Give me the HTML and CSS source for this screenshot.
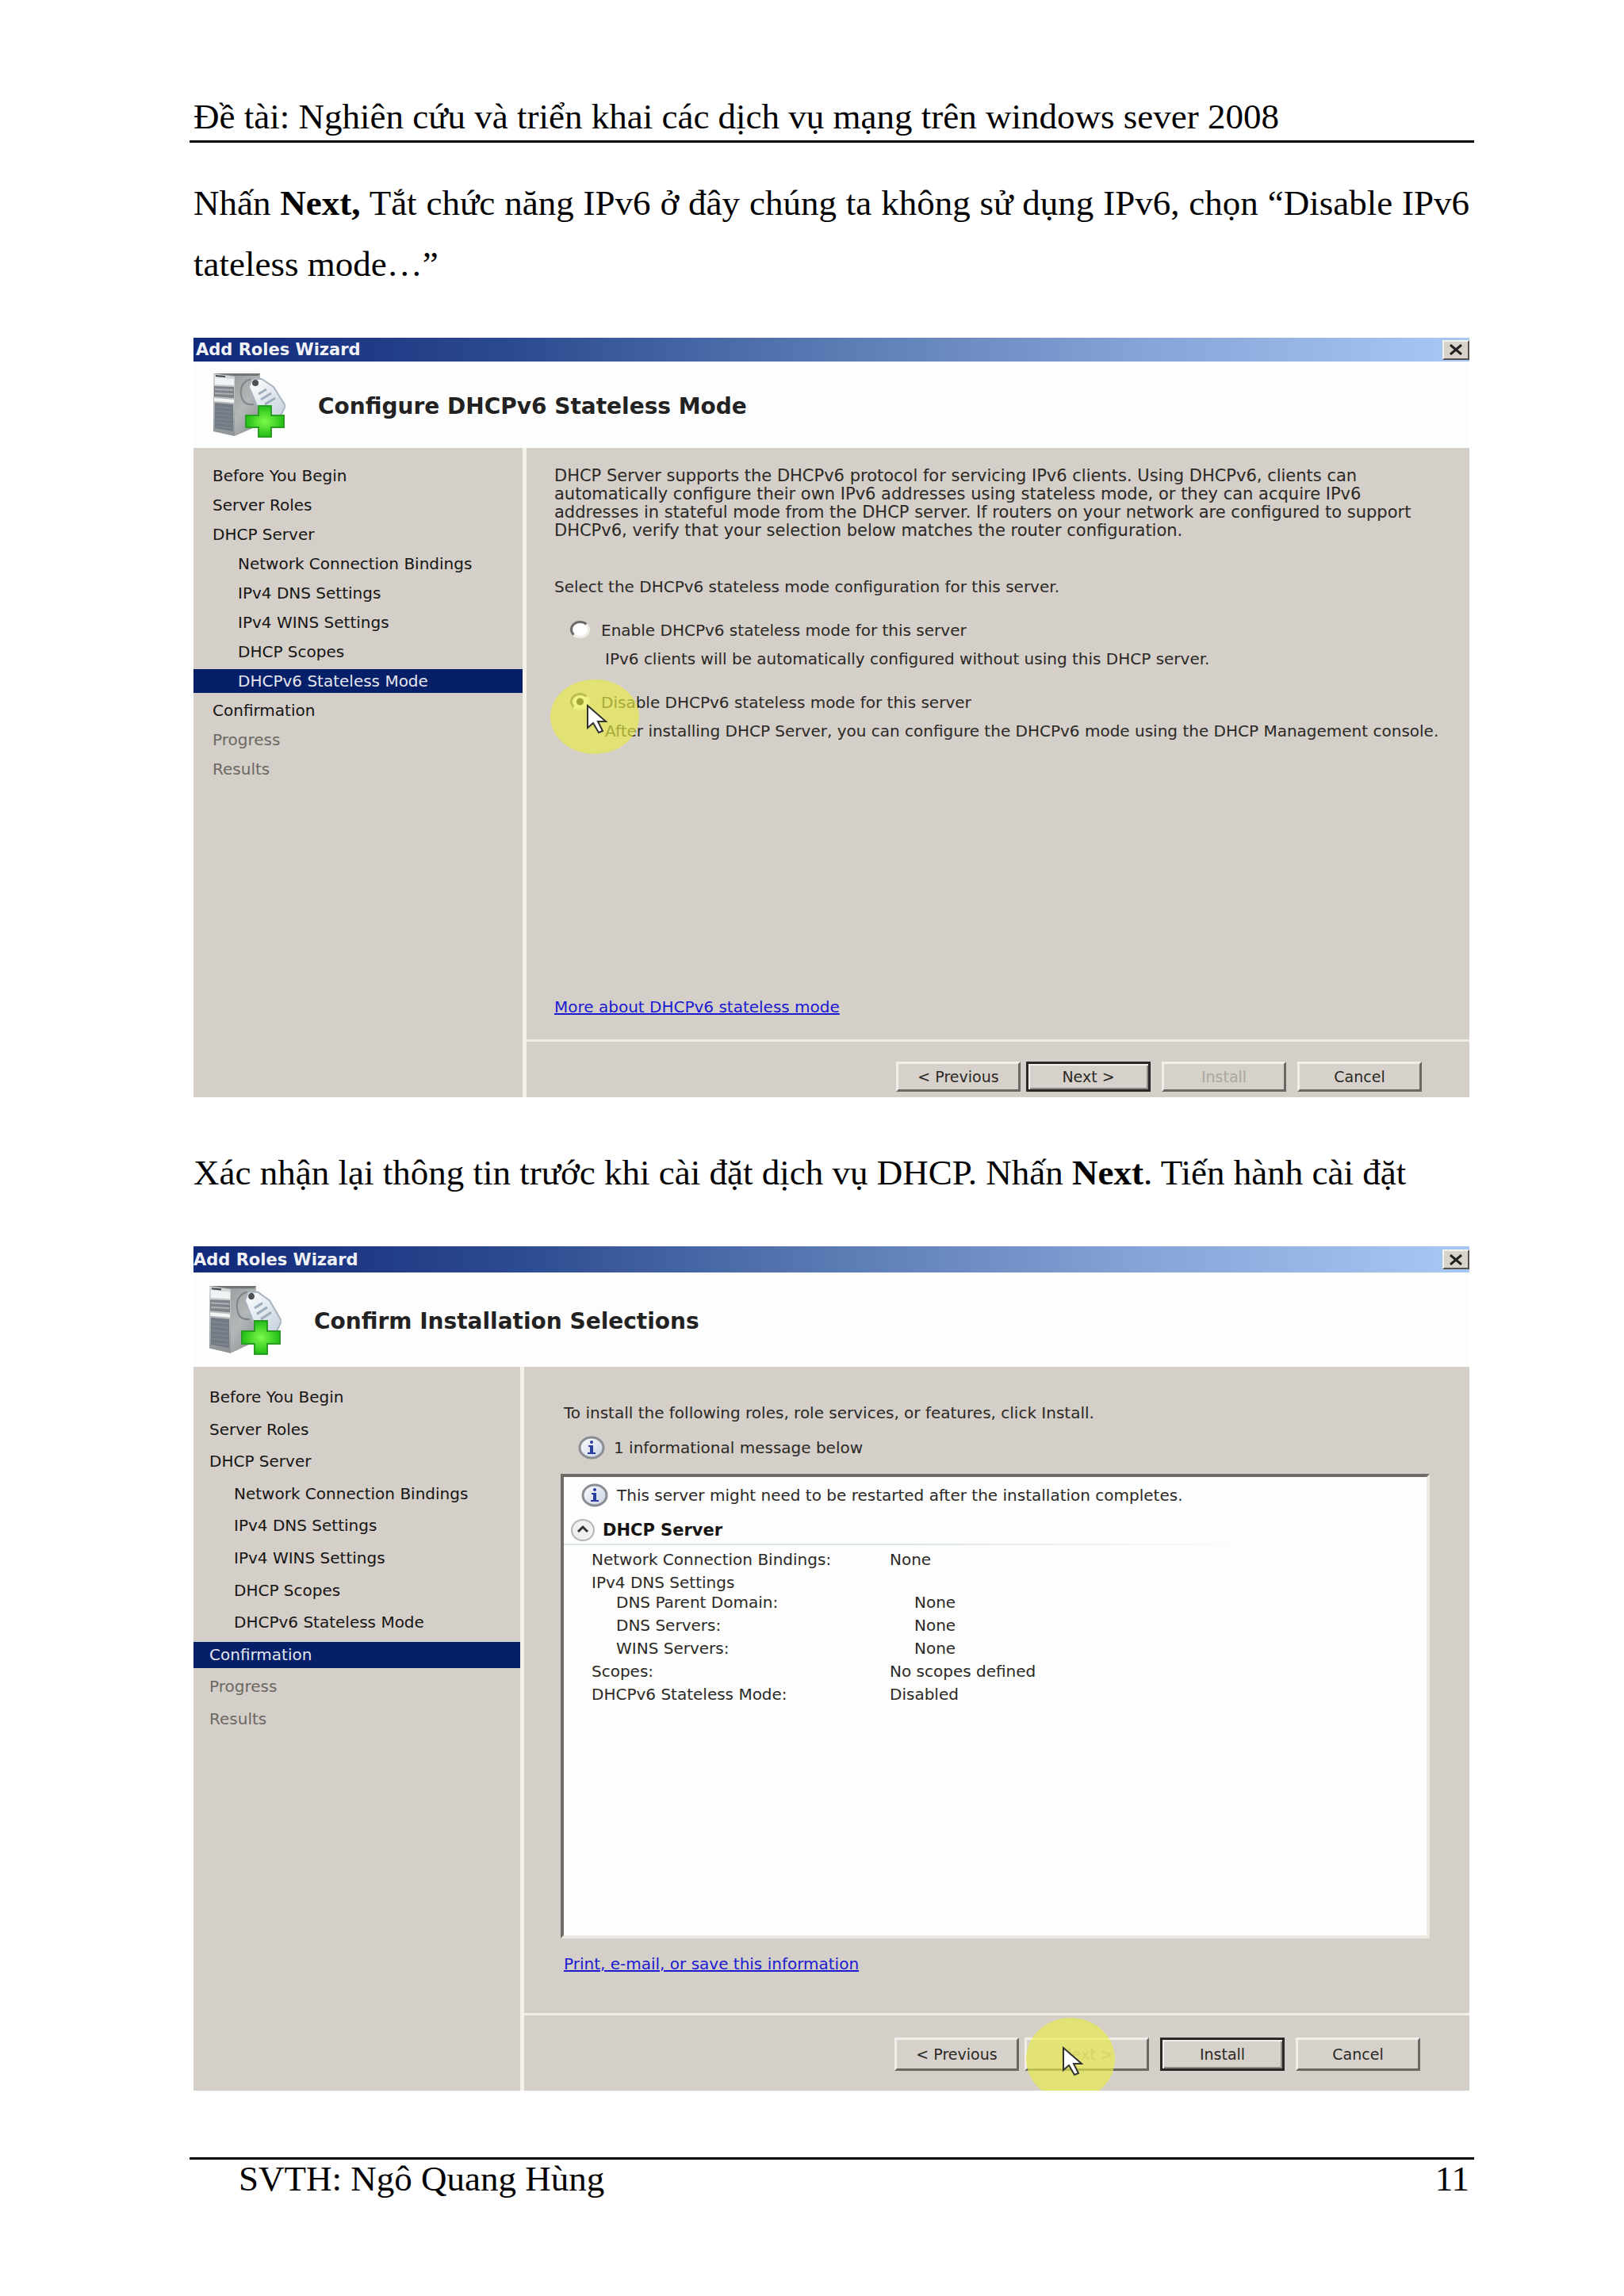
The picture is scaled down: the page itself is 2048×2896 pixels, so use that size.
FILE: index.html
```
<!DOCTYPE html>
<html lang="vi">
<head>
    <meta charset="UTF-8">
    <meta name="viewport" content="width=device-width, initial-scale=1.0">
    <title>Nghiên cứu và triển khai các dịch vụ mạng trên windows sever 2008</title>
    <link rel="stylesheet" href="styles.css">
</head>
<body>

    <!-- Shared icons -->
    <svg class="defs" width="0" height="0" aria-hidden="true">
        <defs>
            <linearGradient id="side" x1="0" y1="0" x2="1" y2="1">
                <stop offset="0" stop-color="#8e9192"/>
                <stop offset="0.6" stop-color="#b4b7b8"/>
                <stop offset="1" stop-color="#85898b"/>
            </linearGradient>
            <linearGradient id="front" x1="0" y1="0" x2="0" y2="1">
                <stop offset="0" stop-color="#d5d9da"/>
                <stop offset="1" stop-color="#8d9296"/>
            </linearGradient>
            <linearGradient id="tag" x1="0" y1="0" x2="1" y2="1">
                <stop offset="0" stop-color="#ffffff"/>
                <stop offset="1" stop-color="#c3d0dc"/>
            </linearGradient>
            <radialGradient id="plus">
                <stop offset="0" stop-color="#7dfb4a"/>
                <stop offset="1" stop-color="#22bd16"/>
            </radialGradient>
            <linearGradient id="bubble" x1="0" y1="0" x2="1" y2="1">
                <stop offset="0" stop-color="#ffffff"/>
                <stop offset="1" stop-color="#c5cfe2"/>
            </linearGradient>
            <symbol id="server" viewBox="0 0 92 82" preserveAspectRatio="none">
                <path d="M1 1H60V66L28 80L1 74Z" fill="url(#side)"/>
                <path d="M1 1L28 5V80L1 74Z" fill="url(#front)"/>
                <path d="M1 1H60L58 4H28Z" fill="#707577"/>
                <path d="M3 6L27 8V16L3 15Z" fill="#f0f2f3"/>
                <path d="M4 3L16 4V6L4 5Z" fill="#44494c"/>
                <path d="M2 17L27 18V32L2 30Z" fill="#7d8388"/>
                <path d="M3 21L26 22M3 26L26 27" stroke="#a9afb3" stroke-width="2"/>
                <path d="M2 32L27 34V38L2 36Z" fill="#f3f5f5"/>
                <path d="M3 38L26 40V74L3 70Z" fill="#737a83"/>
                <path d="M4 43L25 45M4 48L25 50M4 53L25 55M4 58L25 60M4 63L25 65M4 68L25 70" stroke="#858b94" stroke-width="1"/>
                <path d="M50 8C36 10 34 22 37 32C39 38 44 41 52 40" fill="none" stroke="#7f8587" stroke-width="2"/>
                <path d="M46 18L50 8L62 8L77 18L92 42L84 58L58 46Z" fill="url(#tag)" stroke="#a9b6c2" stroke-width="2"/>
                <path d="M58 27L68 21M61 34L74 26M66 40L79 32" stroke="#9faebd" stroke-width="3"/>
                <circle cx="54" cy="13" r="4" fill="#4b5052"/>
                <path d="M58 42H74V54H90V69H74V81H58V69H42V54H58Z" fill="url(#plus)" stroke="#2a9e22" stroke-width="2"/>
            </symbol>
            <symbol id="info" viewBox="0 0 34 30">
                <ellipse cx="17" cy="15" rx="15" ry="13" fill="url(#bubble)" stroke="#8a8d92" stroke-width="3"/>
                <circle cx="17" cy="8" r="2" fill="#2a3ea0"/>
                <path d="M13 12H19V21H22V23H12V21H15V14H13Z" fill="#2a3ea0"/>
            </symbol>
            <symbol id="arrow" viewBox="0 0 28 38">
                <path d="M2 2V30L9 24L16 36L21 34L15 22H25Z" fill="#fff" stroke="#333" stroke-width="2"/>
            </symbol>
            <symbol id="cross" viewBox="0 0 18 14">
                <path d="M2 1L16 13M16 1L2 13" stroke="#222" stroke-width="3"/>
            </symbol>
        </defs>
    </svg>

    <div class="page">
        <header class="page-header">Đề tài: Nghiên cứu và triển khai các dịch vụ mạng trên windows sever 2008</header>

        <main>
            <p class="step">Nhấn <b>Next,</b> Tắt chức năng IPv6 ở đây chúng ta không sử dụng IPv6, chọn “Disable IPv6 tateless mode…”</p>

            <!-- DHCPv6 stateless mode -->
            <section class="wizard mode">
                <div class="title-bar">
                    <span>Add Roles Wizard</span>
                    <button class="close" aria-label="Close"><svg width="18" height="14"><use href="#cross"/></svg></button>
                </div>
                <div class="banner">
                    <svg class="server" width="92" height="82"><use href="#server"/></svg>
                    <h2>Configure DHCPv6 Stateless Mode</h2>
                </div>
                <div class="wizard-body">
                    <ul class="steps">
                        <li>Before You Begin</li>
                        <li>Server Roles</li>
                        <li>DHCP Server</li>
                        <li class="sub">Network Connection Bindings</li>
                        <li class="sub">IPv4 DNS Settings</li>
                        <li class="sub">IPv4 WINS Settings</li>
                        <li class="sub">DHCP Scopes</li>
                        <li class="sub current">DHCPv6 Stateless Mode</li>
                        <li>Confirmation</li>
                        <li class="later">Progress</li>
                        <li class="later">Results</li>
                    </ul>
                    <div class="pane">
                        <div class="content">
                            <p class="intro">DHCP Server supports the DHCPv6 protocol for servicing IPv6 clients. Using DHCPv6, clients can<br>
                                automatically configure their own IPv6 addresses using stateless mode, or they can acquire IPv6<br>
                                addresses in stateful mode from the DHCP server. If routers on your network are configured to support<br>
                                DHCPv6, verify that your selection below matches the router configuration.</p>
                            <p class="question">Select the DHCPv6 stateless mode configuration for this server.</p>
                            <div class="option">
                                <input type="radio" name="stateless" id="enable">
                                <label for="enable">Enable DHCPv6 stateless mode for this server</label>
                                <p>IPv6 clients will be automatically configured without using this DHCP server.</p>
                            </div>
                            <div class="option">
                                <input type="radio" name="stateless" id="disable" checked>
                                <label for="disable">Disable DHCPv6 stateless mode for this server</label>
                                <p>After installing DHCP Server, you can configure the DHCPv6 mode using the DHCP Management console.</p>
                                <div class="pointer"><svg width="28" height="38"><use href="#arrow"/></svg></div>
                            </div>
                            <a class="help" href="#">More about DHCPv6 stateless mode</a>
                        </div>
                        <div class="buttons">
                            <button>&lt; Previous</button>
                            <button class="default">Next &gt;</button>
                            <button disabled>Install</button>
                            <button>Cancel</button>
                        </div>
                    </div>
                </div>
            </section>

            <p class="step">Xác nhận lại thông tin trước khi cài đặt dịch vụ DHCP. Nhấn <b>Next</b>. Tiến hành cài đặt</p>

            <!-- Confirmation -->
            <section class="wizard confirm">
                <div class="title-bar">
                    <span>Add Roles Wizard</span>
                    <button class="close" aria-label="Close"><svg width="18" height="14"><use href="#cross"/></svg></button>
                </div>
                <div class="banner">
                    <svg class="server" width="92" height="88"><use href="#server"/></svg>
                    <h2>Confirm Installation Selections</h2>
                </div>
                <div class="wizard-body">
                    <ul class="steps">
                        <li>Before You Begin</li>
                        <li>Server Roles</li>
                        <li>DHCP Server</li>
                        <li class="sub">Network Connection Bindings</li>
                        <li class="sub">IPv4 DNS Settings</li>
                        <li class="sub">IPv4 WINS Settings</li>
                        <li class="sub">DHCP Scopes</li>
                        <li class="sub">DHCPv6 Stateless Mode</li>
                        <li class="current">Confirmation</li>
                        <li class="later">Progress</li>
                        <li class="later">Results</li>
                    </ul>
                    <div class="pane">
                        <div class="content">
                            <p>To install the following roles, role services, or features, click Install.</p>
                            <div class="message count"><svg width="34" height="30"><use href="#info"/></svg>1 informational message below</div>
                            <div class="summary">
                                <div class="message"><svg width="34" height="30"><use href="#info"/></svg>This server might need to be restarted after the installation completes.</div>
                                <h3>
                                    <svg width="30" height="28" viewBox="0 0 30 28">
                                        <ellipse cx="15" cy="14" rx="14" ry="13" fill="#f0f0f0" stroke="#b5b5b5" stroke-width="2"/>
                                        <path d="M9 16L15 10L21 16" fill="none" stroke="#333" stroke-width="3"/>
                                    </svg>
                                    DHCP Server
                                </h3>
                                <table>
                                    <tr><th>Network Connection Bindings:</th><td>None</td></tr>
                                    <tr class="group"><th>IPv4 DNS Settings</th><td></td></tr>
                                    <tr class="nested"><th>DNS Parent Domain:</th><td>None</td></tr>
                                    <tr class="nested"><th>DNS Servers:</th><td>None</td></tr>
                                    <tr class="nested"><th>WINS Servers:</th><td>None</td></tr>
                                    <tr><th>Scopes:</th><td>No scopes defined</td></tr>
                                    <tr><th>DHCPv6 Stateless Mode:</th><td>Disabled</td></tr>
                                </table>
                            </div>
                            <a class="help" href="#">Print, e-mail, or save this information</a>
                        </div>
                        <div class="buttons">
                            <button>&lt; Previous</button>
                            <button disabled>Next &gt;</button>
                            <button class="default">Install</button>
                            <button>Cancel</button>
                            <div class="pointer"><svg width="28" height="38"><use href="#arrow"/></svg></div>
                        </div>
                    </div>
                </div>
            </section>
        </main>

        <footer class="page-footer">
            <span>SVTH: Ngô Quang Hùng</span>
            <span>11</span>
        </footer>
    </div>

</body>
</html>
```
FILE: styles.css
```
* {
    box-sizing: border-box;
}
body {
    margin: 0;
    background: #fff;
    color: #000;
    font-family: "Liberation Serif", "Times New Roman", serif;
    font-size: 45px;
}
p, h2, h3, ul {
    margin: 0;
    padding: 0;
}
.defs {
    position: absolute;
}

/* Document page */
.page {
    padding: 117px 189px 100px 239px;
}
.page-header {
    padding-left: 5px;
    line-height: 60px;
    border-bottom: 3px solid #000;
}
main {
    padding: 38px 6px 84px 5px;
}
.step {
    line-height: 77px;
    margin-bottom: 54px;
    text-align: justify;
}
.page-footer {
    display: flex;
    justify-content: space-between;
    padding: 0 6px 0 62px;
    border-top: 3px solid #000;
    line-height: 48px;
}

/* Wizard window */
.wizard {
    position: relative;
    overflow: hidden;
    background: #d4cfc8;
    color: #2b2926;
    font-family: "DejaVu Sans", Verdana, sans-serif;
    font-size: 20px;
    line-height: 24px;
}
.mode {
    margin-bottom: 57px;
}
.title-bar {
    display: flex;
    align-items: center;
    justify-content: space-between;
    height: 30px;
    padding-left: 3px;
    background: linear-gradient(to right, #10297a, #2c4a90 25%, #5a7ab4 50%, #86a5d8 75%, #a8c8f4);
    color: #f0f2f8;
    font-size: 21px;
    font-weight: bold;
}
.close {
    display: flex;
    align-items: center;
    justify-content: center;
    width: 34px;
    height: 25px;
    padding: 0;
    background: #d8d4cc;
    border: 2px solid;
    border-color: #f4f2ee #55534f #55534f #f4f2ee;
}
.banner {
    display: flex;
    align-items: center;
    gap: 41px;
    height: 109px;
    padding-left: 24px;
    background: #fdfdfd;
}
.banner h2 {
    padding-top: 4px;
    color: #222;
    font-size: 28px;
    line-height: 34px;
}
.wizard-body {
    display: flex;
}
.steps {
    display: flex;
    flex-direction: column;
    gap: 7px;
    width: 415px;
    padding-top: 20px;
    list-style: none;
    color: #161514;
}
.steps li {
    padding-left: 24px;
    line-height: 30px;
}
.steps .sub {
    padding-left: 56px;
}
.steps .current {
    background: #061f69;
    color: #e4e6ee;
}
.steps .later {
    color: #6b6864;
}
.pane {
    flex: 1;
    border-left: 5px solid #f5f2ec;
}
.content {
    display: flex;
    flex-direction: column;
    align-items: flex-start;
    min-height: 746px;
    padding: 24px 35px 29px;
}
.intro {
    font-size: 21px;
    line-height: 23px;
    white-space: nowrap;
}
.question {
    margin-top: 47px;
}
.option {
    position: relative;
    display: grid;
    grid-template-columns: 27px auto;
    column-gap: 12px;
    row-gap: 12px;
    margin: 31px 0 0 20px;
}
.option p {
    grid-column: 2;
    padding-left: 5px;
    white-space: nowrap;
}
.option input {
    appearance: none;
    width: 25px;
    height: 22px;
    margin: 0;
    border: 3px solid;
    border-color: #6d6a66 #f0eee9 #f0eee9 #6d6a66;
    border-radius: 50%;
    background: #fff;
}
.option input:checked {
    background: radial-gradient(circle, #1c1b19 4px, #fff 5px);
}
.help {
    margin-top: auto;
    color: #1c1ad0;
}
.buttons {
    position: relative;
    display: flex;
    justify-content: flex-end;
    gap: 14px;
    padding: 25px 60px 7px 0;
    border-top: 3px solid #f0ece7;
}
.buttons button {
    width: 157px;
    height: 38px;
    padding: 0;
    background: #d6d2cb;
    border: 3px solid;
    border-color: #f2efea #6b6864 #6b6864 #f2efea;
    color: #2b2926;
    font-family: inherit;
    font-size: 19px;
}
.buttons button:first-child {
    margin-right: -7px;
}
.buttons .default {
    border-color: #2a2826;
    box-shadow: inset 2px 2px #f2efea, inset -2px -2px #8d8a85;
}
.buttons button:disabled {
    color: #aaa6a0;
}

/* Mouse pointer with its yellow highlight */
.pointer {
    position: absolute;
    left: -25px;
    top: -17px;
    width: 112px;
    height: 94px;
    padding: 31px 0 0 45px;
    border-radius: 50%;
    background: rgba(232, 236, 69, 0.65);
    line-height: 0;
    pointer-events: none;
}

/* Confirmation window */
.confirm .title-bar {
    height: 33px;
    padding-left: 0;
}
.confirm .banner {
    height: 119px;
    padding-left: 19px;
}
.confirm .steps {
    width: 412px;
    height: 461px;
    padding-top: 22px;
    justify-content: space-between;
    gap: 0;
}
.confirm .steps li {
    padding-left: 20px;
    line-height: 33px;
}
.confirm .steps .sub {
    padding-left: 51px;
}
.confirm .content {
    align-items: stretch;
    padding: 46px 50px 50px;
}
.message {
    display: flex;
    align-items: center;
    gap: 11px;
    line-height: 30px;
}
.count {
    margin: 17px 0 18px 18px;
}
.summary {
    min-height: 586px;
    margin: 0 0 20px -4px;
    border: 4px solid;
    border-color: #6f6c68 #ece9e3 #ece9e3 #6f6c68;
    background: #fdfdfd;
}
.summary .message {
    padding: 8px 0 0 22px;
}
.summary h3 {
    display: flex;
    align-items: center;
    gap: 10px;
    margin-top: 14px;
    padding: 0 0 2px 9px;
    border-bottom: 2px solid;
    border-image: linear-gradient(to right, #dce6e6, #dce6e6 40%, #fdfdfd 80%) 1;
    color: #161514;
    font-size: 21px;
    line-height: 30px;
}
.summary table {
    margin: 6px 0 0 35px;
    border-collapse: collapse;
}
.summary th, .summary td {
    padding: 0 0 5px;
    font-weight: normal;
    text-align: left;
}
.summary th {
    width: 376px;
}
.summary .group th, .summary .group td {
    padding-bottom: 1px;
}
.summary .nested th, .summary .nested td {
    padding-left: 31px;
}
.confirm .help {
    align-self: flex-start;
}
.confirm .buttons {
    padding: 28px 62px 25px 0;
}
.confirm .buttons button {
    height: 42px;
}
.confirm .pointer {
    left: auto;
    right: 447px;
    top: 3px;
    height: 104px;
    padding-top: 36px;
}
```
